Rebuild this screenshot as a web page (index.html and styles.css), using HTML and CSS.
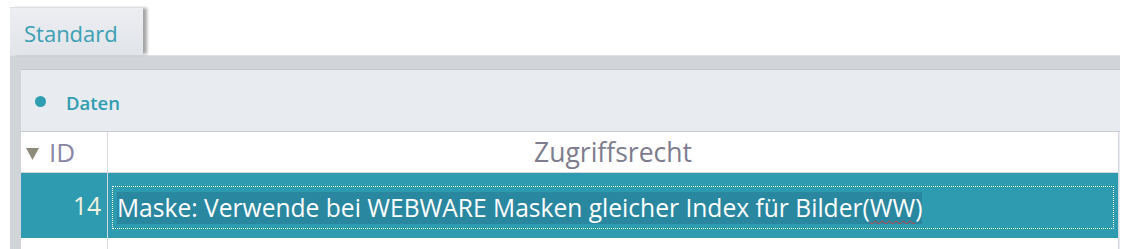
FILE: index.html
```html
<!DOCTYPE html>
<html lang="de">
<head>
  <meta charset="UTF-8" />
  <title>Zugriffsrechte</title>
  <link rel="stylesheet" href="styles.css">
</head>
<body>
  <div class="tabs">
    <div class="tab">Standard</div>
  </div>
  <div class="panel">
    <div class="panel-inner">
      <div class="section-head">
        <span class="dot"></span>
        <span class="section-title">Daten</span>
      </div>
      <table class="grid">
        <thead>
          <tr>
            <th class="col-id">
              <svg class="sort-icon" width="13" height="12" viewBox="0 0 13 12"><polygon points="0,0 13,0 6.5,12" fill="#8f8b7a"/></svg><span>ID</span>
            </th>
            <th class="col-name">Zugriffsrecht</th>
          </tr>
        </thead>
        <tbody>
          <tr class="selected">
            <td class="col-id">14</td>
            <td class="col-name">
              <div class="focus-box">
                <span class="sel-text">Maske: Verwende bei WEBWARE Masken gleicher Index für Bilder(<span class="spell">WW</span>)</span>
              </div>
            </td>
          </tr>
          <tr class="empty">
            <td class="col-id"></td>
            <td class="col-name"></td>
          </tr>
        </tbody>
      </table>
    </div>
  </div>
</body>
</html>
```

FILE: styles.css
```css
body {
  margin: 0;
  font-family: 'Open Sans', 'Noto Sans', sans-serif;
  background: #fff;
  overflow: hidden;
}

.tabs {
  display: flex;
  padding: 7px 0 0 10px;
  height: 48px;
}

.tab {
  width: 133px;
  height: 48px;
  box-sizing: border-box;
  padding: 10px 0 0 14px;
  background: linear-gradient(#eceef2, #e1e4e9);
  border-top: 1px solid #dcdfe4;
  color: #3aa0b3;
  font-size: 22px;
  box-shadow: 5px 0 3px -1px rgba(0, 0, 0, 0.35);
}

.panel {
  margin-left: 10px;
  width: 1110px;
  height: 194px;
  padding: 13px 0 0 11px;
  box-sizing: border-box;
  background: #d1d5da;
  border-top: 1px solid #dcdfe3;
}

.panel-inner {
  background: #e8ebef;
  height: 100%;
  overflow: hidden;
}

.section-head {
  height: 63px;
  box-sizing: border-box;
  display: flex;
  align-items: center;
  border-top: 1px solid #c3c8ce;
  border-bottom: 1px solid #c7ccd2;
}

.dot {
  flex: none;
  width: 11px;
  height: 11px;
  border-radius: 50%;
  background: #2f9db2;
  margin: 2px 0 0 14px;
}

.section-title {
  margin-left: 20px;
  color: #2f9db2;
  font-size: 18.5px;
  font-weight: 600;
  padding-top: 3px;
}

.grid {
  width: 1098px;
  border-collapse: collapse;
  background: #fff;
  table-layout: fixed;
}

.grid th,
.grid td {
  padding: 0;
  border-right: 1px solid #d6dae0;
}

.grid thead tr {
  height: 40px;
  border-bottom: 1px solid #d3d7dd;
}

.grid th {
  font-weight: normal;
  font-size: 26.5px;
  color: #7e7d8e;
}

.grid th.col-id {
  width: 81px;
  text-align: left;
  padding-left: 5px;
  font-size: 26px;
  color: #8a86a4;
}

.sort-icon {
  margin-right: 10px;
  vertical-align: 2px;
}

.grid th.col-name {
  text-align: center;
}

.selected {
  background: #2e9bb0;
  color: #fff;
  font-size: 24.6px;
  height: 66px;
}

.selected td.col-id {
  text-align: right;
  padding-right: 6px;
  color: #f3f3df;
}

.selected td.col-name {
  padding: 13px 4px 9px 4px;
}

.focus-box {
  border: 1px dotted #fff;
  height: 43px;
  box-sizing: border-box;
  padding: 4px 0 0 4px;
}

.sel-text {
  display: inline-block;
  background: #2a87a0;
  line-height: 32px;
}

.spell {
  text-decoration: underline wavy #d43a3a;
  text-decoration-thickness: 1px;
  text-underline-offset: 3px;
}

.empty {
  height: 20px;
}
```
